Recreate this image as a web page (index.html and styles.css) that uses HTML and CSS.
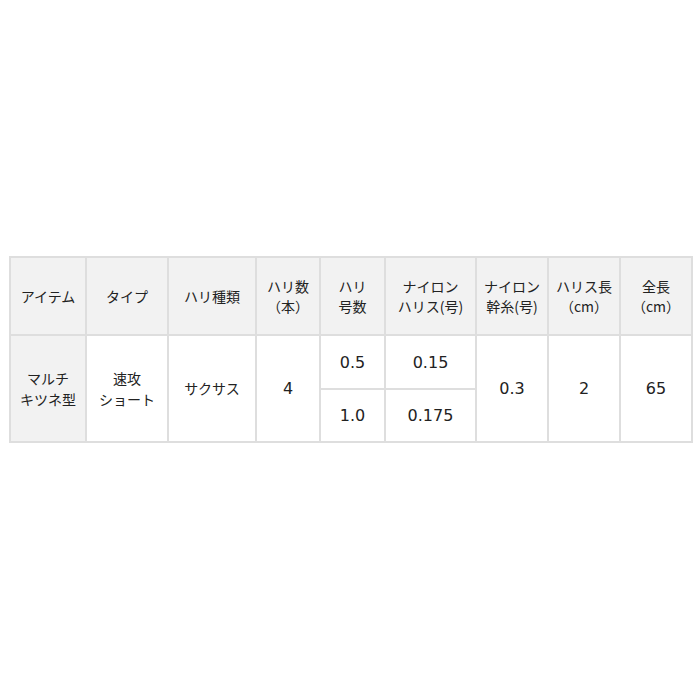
FILE: index.html
```html
<!DOCTYPE html>
<html lang="ja">
<head>
<meta charset="utf-8">
<title>仕様</title>
<link rel="stylesheet" href="styles.css">
</head>
<body>
<div class="wrap">
<table class="spec">
<thead>
<tr class="head">
<th class="c1">アイテム</th>
<th class="c2">タイプ</th>
<th class="c3">ハリ種類</th>
<th class="c4">ハリ数<br>（本）</th>
<th class="c5">ハリ<br>号数</th>
<th class="c6">ナイロン<br>ハリス(号)</th>
<th class="c7">ナイロン<br>幹糸(号)</th>
<th class="c8">ハリス長<br>（cm）</th>
<th class="c9">全長<br>（cm）</th>
</tr>
</thead>
<tbody>
<tr class="r1">
<td rowspan="2" class="gray">マルチ<br>キツネ型</td>
<td rowspan="2">速攻<br>ショート</td>
<td rowspan="2">サクサス</td>
<td rowspan="2" class="num">4</td>
<td class="num">0.5</td>
<td class="num">0.15</td>
<td rowspan="2" class="num">0.3</td>
<td rowspan="2" class="num">2</td>
<td rowspan="2" class="num">65</td>
</tr>
<tr class="r2">
<td class="num">1.0</td>
<td class="num">0.175</td>
</tr>
</tbody>
</table>
</div>
</body>
</html>
```
FILE: styles.css
```css
html, body {
  margin: 0;
  padding: 0;
  background: #fff;
}
.wrap {
  padding: 256px 0 0 9px;
}
.spec {
  border-collapse: separate;
  border-spacing: 0;
  table-layout: fixed;
  width: 684px;
  border-top: 2px solid #dedede;
  border-left: 2px solid #dedede;
  font-family: "Noto Sans CJK JP", sans-serif;
  font-size: 14px;
  line-height: 21px;
  color: #222;
}
.spec th, .spec td {
  box-sizing: border-box;
  padding: 0;
  border-right: 2px solid #dedede;
  border-bottom: 2px solid #dedede;
  text-align: center;
  vertical-align: middle;
  font-weight: normal;
}
.spec th {
  background: #f2f2f2;
  line-height: 20px;
}
.spec td {
  background: #fff;
}
.spec td.gray {
  background: #f2f2f2;
}
.spec td.num {
  font-family: "DejaVu Sans", sans-serif;
  font-size: 16px;
}
.spec .c1 { width: 76px; }
.spec .c2 { width: 82px; }
.spec .c3 { width: 88px; }
.spec .c4 { width: 64px; }
.spec .c5 { width: 65px; }
.spec .c6 { width: 91px; }
.spec .c7 { width: 72px; }
.spec .c8 { width: 72px; }
.spec .c9 { width: 72px; }
.head { height: 78px; }
.r1 { height: 54px; }
.r2 { height: 53px; }
```
